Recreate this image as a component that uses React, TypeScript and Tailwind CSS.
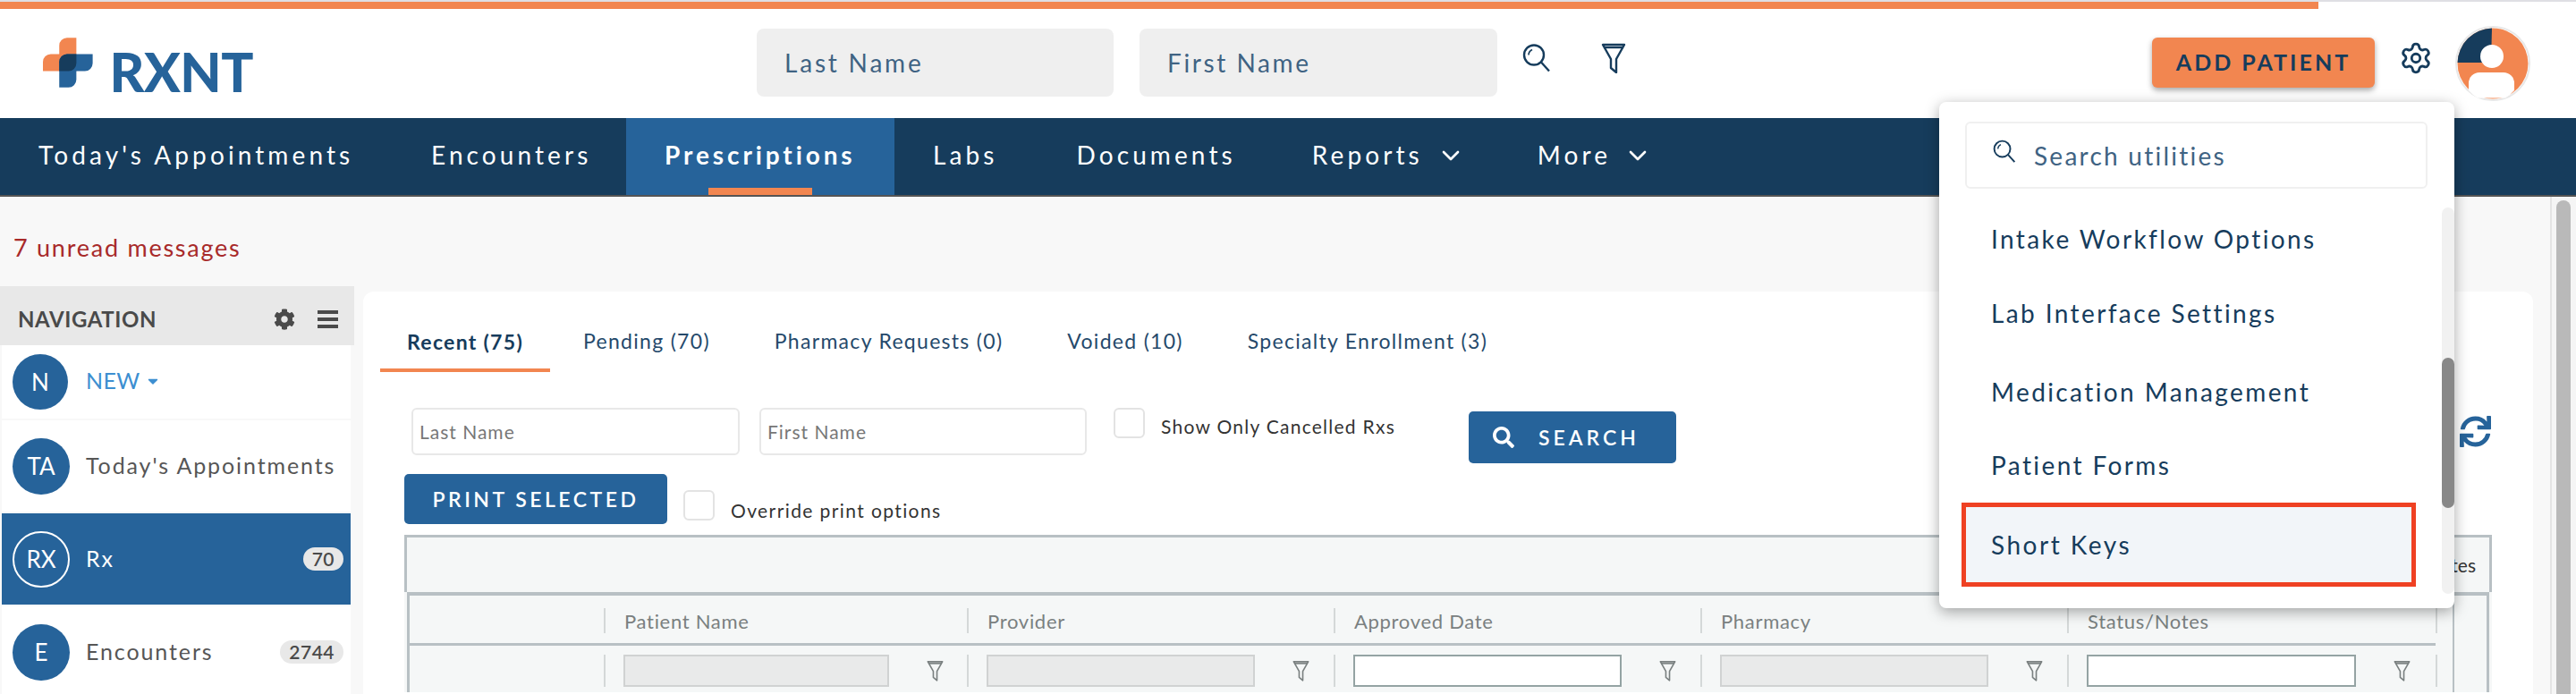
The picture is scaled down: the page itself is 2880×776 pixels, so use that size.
import { ChevronDown, Settings } from "lucide-react";
import { FaCaretDown, FaCog, FaSearch, FaSync } from "react-icons/fa";

const topNav = [
  { label: "Today's Appointments", w: "w-[349px]" },
  { label: "Encounters", w: "w-[173px]" },
];

const menuItems = [
  { label: "Intake Workflow Options", cls: "mt-[39px]" },
  { label: "Lab Interface Settings", cls: "mt-[49px]" },
  { label: "Medication Management", cls: "mt-[54px]" },
  { label: "Patient Forms", cls: "mt-[48px]" },
];

const columns = [
  { label: "Patient Name", editable: false, w: "w-[406px]", input: "w-[297px]" },
  { label: "Provider", editable: false, w: "w-[410px]", input: "w-[300px]" },
  { label: "Approved Date", editable: true, w: "w-[410px]", input: "w-[300px]" },
  { label: "Pharmacy", editable: false, w: "w-[410px]", input: "w-[300px]" },
  { label: "Status/Notes", editable: true, w: "w-[412px]", input: "w-[301px]" },
];

function Loupe({ className }: { className: string }) {
  return (
    <svg viewBox="0 0 32 32" fill="none" stroke="currentColor" strokeWidth="2.4" className={className}>
      <circle cx="13" cy="13" r="11" />
      <path d="M21 21l9 10" />
      <path d="M7 13c0-3 2-5 4-6" strokeWidth="1.6" />
    </svg>
  );
}

function Funnel({ className }: { className: string }) {
  return (
    <svg viewBox="0 0 28 34" fill="none" stroke="currentColor" strokeWidth="2.4" strokeLinejoin="round" className={className}>
      <path d="M2 2h24L17 18v15l-6-5V18z" />
      <path d="M3 5h22" />
    </svg>
  );
}

function Logo() {
  return (
    <div className="mt-[28px] flex w-[235px] items-start">
      <svg viewBox="0 0 64 64" className="h-[64px] w-[64px]">
        <path d="M43 0H31a10 10 0 0 0-10 10v11H10a10 10 0 0 0-10 10v12h43z" fill="#f28650" />
        <path d="M31 21a10 10 0 0 0-10 10v33h12a10 10 0 0 0 10-10V43h11a10 10 0 0 0 10-10V21z" fill="#26639a" />
        <path d="M31 21h12v12a10 10 0 0 1-10 10H21V31a10 10 0 0 1 10-10z" fill="#163c5c" />
      </svg>
      <span className="mt-[7px] ml-[19px] text-[60px] leading-[70px] font-black tracking-[-0.5px] text-[#26639a]">RXNT</span>
    </div>
  );
}

function Avatar() {
  return (
    <svg viewBox="0 0 84 86" className="mt-[18px] ml-[25px] h-[86px] w-[84px]">
      <circle cx="42" cy="43" r="41" fill="#fff" stroke="#e8e8e8" strokeWidth="2" />
      <circle cx="42" cy="43" r="39.5" fill="#f28650" />
      <path d="M41 3.500A39.500 39.500 0 0 0 2.500 42H40z" fill="#163c5c" />
      <circle cx="41" cy="35" r="13" fill="#fff" />
      <path d="M15 73V65a12 12 0 0 1 12-12h27a12 12 0 0 1 12 12v8a40 40 0 0 1-10 8.500H25a40 40 0 0 1-10-8.500z" fill="#fff" />
    </svg>
  );
}

function SideRow({
  initials,
  label,
  count,
  active,
}: {
  initials: string;
  label: string;
  count?: string;
  active?: boolean;
}) {
  return (
    <div className={`mt-[2px] flex h-[102px] items-center pl-[12px] ${active ? "bg-[#26639a] text-white" : "bg-white text-[#565656]"}`}>
      <div
        className={`flex h-[63px] w-[64px] shrink-0 items-center justify-center rounded-full text-[26px] text-white ${
          active ? "border-2 border-white" : "bg-[#26639a]"
        }`}
      >
        {initials}
      </div>
      <span className="ml-[18px] text-[25px] tracking-[1.900px]">{label}</span>
      {count ? (
        <span className="mr-[8px] ml-auto rounded-[13px] bg-[#e8e8e8] px-[10px] text-[21px] leading-[26px] font-semibold tracking-[0.5px] text-[#4a4a4a]">
          {count}
        </span>
      ) : null}
    </div>
  );
}

function Checkbox({ className }: { className: string }) {
  return <div className={`h-[34px] w-[35px] rounded-[6px] border-2 border-[#e3e3e3] bg-white ${className}`} />;
}

export default function App() {
  return (
    <div className="relative flex h-[776px] w-[2880px] flex-col overflow-hidden bg-[#f8f8f8] font-['Lato',sans-serif]">
      {/* progress strip */}
      <div className="h-[10px] bg-white">
        <div className="h-[2px] bg-[#dfdfe4]" />
        <div className="h-[8px] w-[2592px] bg-[#f28650]" />
      </div>

      <header className="flex h-[122px] bg-white pl-[48px]">
        <Logo />
        <div className="mt-[22px] ml-[563px] flex h-[76px] w-[399px] items-center rounded-[8px] bg-[#efefef] pl-[31px] text-[28px] tracking-[2.800px] text-[#3f6383]">
          Last Name
        </div>
        <div className="mt-[22px] ml-[29px] flex h-[76px] w-[400px] items-center rounded-[8px] bg-[#efefef] pl-[31px] text-[28px] tracking-[2.600px] text-[#3f6383]">
          First Name
        </div>
        <Loupe className="mt-[38px] ml-[28px] h-[33px] w-[32px] text-[#163c5c]" />
        <Funnel className="mt-[38px] ml-[56px] h-[34px] w-[28px] text-[#163c5c]" />
        <div className="mt-[32px] ml-[588px] flex h-[56px] w-[249px] items-center justify-center rounded-[6px] bg-[#f28650] text-[25px] font-bold tracking-[3px] text-[#163c5c] shadow-[0_3px_6px_rgba(0,0,0,0.35)]">
          ADD PATIENT
        </div>
        <Settings className="mt-[36px] ml-[27px] h-[38px] w-[38px] text-[#163c5c]" strokeWidth={1.8} />
        <Avatar />
      </header>

      <nav className="flex h-[88px] shrink-0 border-b-2 border-[#555] bg-[#163c5c] text-[28px] tracking-[4.100px] text-white">
        <div className="ml-[43px] flex gap-[90px] pt-[20px]">
          {topNav.map((item) => (
            <span key={item.label} className={`${item.w} whitespace-nowrap`}>
              {item.label}
            </span>
          ))}
        </div>
        <div className="relative ml-[45px] h-[86px] w-[300px] bg-[#26639a] pt-[20px] pl-[43px] font-bold tracking-[3.900px] whitespace-nowrap">
          Prescriptions
          <div className="absolute bottom-0 left-[92px] h-[8px] w-[116px] bg-[#f28650]" />
        </div>
        <div className="ml-[43px] pt-[20px]">Labs</div>
        <div className="ml-[88px] pt-[20px]">Documents</div>
        <div className="ml-[85px] flex items-start pt-[20px]">
          Reports <ChevronDown className="mt-[6px] ml-[15px] h-[32px] w-[32px]" strokeWidth={2} />
        </div>
        <div className="ml-[81px] flex items-start pt-[20px]">
          More <ChevronDown className="mt-[6px] ml-[14px] h-[32px] w-[32px]" strokeWidth={2} />
        </div>
      </nav>

      <main className="flex min-h-0 flex-1">
        <div className="flex w-[2851px] flex-col">
          <div className="h-[100px] pt-[40px] pl-[15px] text-[27px] leading-[34px] tracking-[1.750px] text-[#a82a2a]">7 unread messages</div>
          <div className="flex min-h-0 flex-1">
            {/* left navigation */}
            <aside className="w-[396px] shrink-0">
              <div className="flex h-[66px] items-center bg-[#e8e8e8] pt-[8px] pr-[18px] pl-[20px] text-[#4a4a4a]">
                <span className="text-[24px] font-bold tracking-[0.6px]">NAVIGATION</span>
                <FaCog className="ml-auto h-[26px] w-[24px]" />
                <div className="ml-[25px] flex h-[20px] w-[23px] flex-col justify-between">
                  <div className="h-[4px] bg-[#4a4a4a]" />
                  <div className="h-[4px] bg-[#4a4a4a]" />
                  <div className="h-[4px] bg-[#4a4a4a]" />
                </div>
              </div>
              <div className="mr-[4px] ml-[2px]">
                <div className="flex h-[82px] items-center bg-white pl-[12px]">
                  <div className="flex h-[62px] w-[62px] items-center justify-center rounded-full bg-[#26639a] text-[26px] text-white">N</div>
                  <span className="mb-[2px] ml-[20px] text-[25px] tracking-[0.4px] text-[#3d8fd1]">NEW</span>
                  <FaCaretDown className="mb-[2px] ml-[6px] h-[18px] w-[16px] text-[#3d8fd1]" />
                </div>
                <SideRow initials="TA" label="Today's Appointments" />
                <SideRow initials="RX" label="Rx" count="70" active />
                <SideRow initials="E" label="Encounters" count="2744" />
              </div>
            </aside>

            {/* work area */}
            <section className="mt-[6px] ml-[10px] w-[2426px] shrink-0 rounded-t-[12px] bg-white">
              <div className="flex h-[90px] items-start pl-[19px] text-[23px] tracking-[1.300px] text-[#25496b]">
                <div className="flex h-[90px] w-[190px] items-center justify-center border-b-4 border-[#f28650] pt-[26px] font-bold whitespace-nowrap text-[#163c5c]">
                  Recent (75)
                </div>
                <div className="ml-[37px] flex gap-[72px] pt-[38px]">
                  <span>Pending (70)</span>
                  <span>Pharmacy Requests (0)</span>
                  <span>Voided (10)</span>
                  <span>Specialty Enrollment (3)</span>
                </div>
              </div>

              <div className="flex h-[114px] items-start pl-[54px]">
                <div className="mt-[40px] flex h-[53px] w-[367px] items-center rounded-[6px] border-2 border-[#e8e8e8] pl-[7px] text-[21px] tracking-[1px] text-[#777]">Last Name</div>
                <div className="mt-[40px] ml-[22px] flex h-[53px] w-[366px] items-center rounded-[6px] border-2 border-[#e8e8e8] pl-[7px] text-[21px] tracking-[1px] text-[#777]">First Name</div>
                <Checkbox className="mt-[40px] ml-[30px]" />
                <span className="mt-[48px] ml-[18px] w-[262px] text-[21px] leading-[26px] tracking-[1.260px] whitespace-nowrap text-[#333]">Show Only Cancelled Rxs</span>
                <div className="mt-[44px] ml-[82px] flex h-[58px] w-[232px] items-center rounded-[5px] bg-[#26639a] pl-[27px] text-[23px] font-semibold tracking-[4px] text-white">
                  <FaSearch className="h-[24px] w-[24px]" />
                  <span className="ml-[27px]">SEARCH</span>
                </div>
                <FaSync className="mt-[49px] ml-[876px] h-[35px] w-[35px] text-[#26639a]" />
              </div>

              <div className="flex h-[68px] items-start pl-[46px]">
                <div className="mt-[0px] flex h-[56px] w-[294px] items-center justify-center rounded-[5px] bg-[#26639a] text-[23px] font-semibold tracking-[3.500px] text-white">
                  PRINT SELECTED
                </div>
                <Checkbox className="mt-[18px] ml-[18px]" />
                <span className="mt-[28px] ml-[18px] text-[21px] leading-[26px] tracking-[1.400px] text-[#333]">Override print options</span>
              </div>

              <div className="ml-[46px] w-[2334px] bg-[#f5f7f7]">
                <div className="flex h-[64px] items-center justify-end border-x-[3px] border-t-[3px] border-[#b8c0c4] pr-[15px] text-[21px] text-[#333]">
                  Notes
                </div>
                <div className="mx-[3px] flex h-[112px] border-x-[3px] border-t-4 border-[#b8c0c4]">
                  <div className="flex-1 border-r-2 border-[#b8c0c4]">
                    <div className="flex h-[56px] w-[2265px] border-b-[3px] border-[#b8c0c4]">
                      <div className="w-[217px] shrink-0" />
                      {columns.map((col) => (
                        <div key={col.label} className={`mt-[14px] mb-[11px] flex ${col.w} shrink-0 items-center border-l-2 border-[#d4d8d8] pl-[21px] text-[22px] tracking-[0.7px] text-[#7a8080]`}>
                          {col.label}
                        </div>
                      ))}
                      <div className="mt-[14px] mb-[11px] border-l-2 border-[#d4d8d8]" />
                    </div>
                    <div className="flex h-[50px] w-[2265px] pt-[10px]">
                      <div className="w-[217px] shrink-0" />
                      {columns.map((col) => (
                        <div key={col.label} className={`flex h-[36px] ${col.w} shrink-0 items-center border-l-2 border-[#d4d8d8] pl-[20px]`}>
                          <div className={`h-[36px] ${col.input} border-2 ${col.editable ? "border-[#94a3a3] bg-white" : "border-[#d0d2d2] bg-[#e9eaea]"}`} />
                          <Funnel className="ml-[42px] h-[28px] w-[19px] text-[#7a8080]" />
                        </div>
                      ))}
                      <div className="h-[36px] border-l-2 border-[#d4d8d8]" />
                    </div>
                  </div>
                  <div className="w-[36px]" />
                </div>
              </div>
            </section>
          </div>
        </div>

        {/* page scrollbar */}
        <div className="w-[29px] border-l-2 border-[#e4e4e4] bg-[#f5f5f5] pt-[4px] pl-[5px]">
          <div className="h-[600px] w-[16px] rounded-full bg-[#b9b9b9]" />
        </div>
      </main>

      {/* utilities dropdown */}
      <div className="absolute top-[114px] left-[2168px] h-[566px] w-[576px] rounded-[8px] bg-white shadow-[0_4px_16px_rgba(0,0,0,0.35)]">
        <div className="mx-[29px] mt-[22px] flex h-[75px] w-[517px] items-center rounded-[6px] border-2 border-[#f0f0f0] pl-[29px]">
          <Loupe className="mb-[10px] h-[26px] w-[26px] text-[#163c5c]" />
          <span className="ml-[20px] text-[28px] tracking-[2.250px] text-[#3f6383]">Search utilities</span>
        </div>
        <div className="absolute top-[118px] right-0 h-[432px] w-[14px] rounded-full bg-[#f1f1f1]">
          <div className="mt-[168px] h-[168px] w-[14px] rounded-full bg-[#888]" />
        </div>
        <div className="flex flex-col pl-[58px] text-[28px] leading-[34px] tracking-[2.400px] text-[#163c5c]">
          {menuItems.map((item) => (
            <span key={item.label} className={item.cls}>
              {item.label}
            </span>
          ))}
        </div>
        <div className="mt-[25px] ml-[25px] flex h-[94px] w-[508px] items-center border-[5px] border-[#ef4123] bg-[#f2f5f9] pl-[28px] text-[28px] tracking-[2.500px] text-[#163c5c]">
          Short Keys
        </div>
      </div>
    </div>
  );
}
